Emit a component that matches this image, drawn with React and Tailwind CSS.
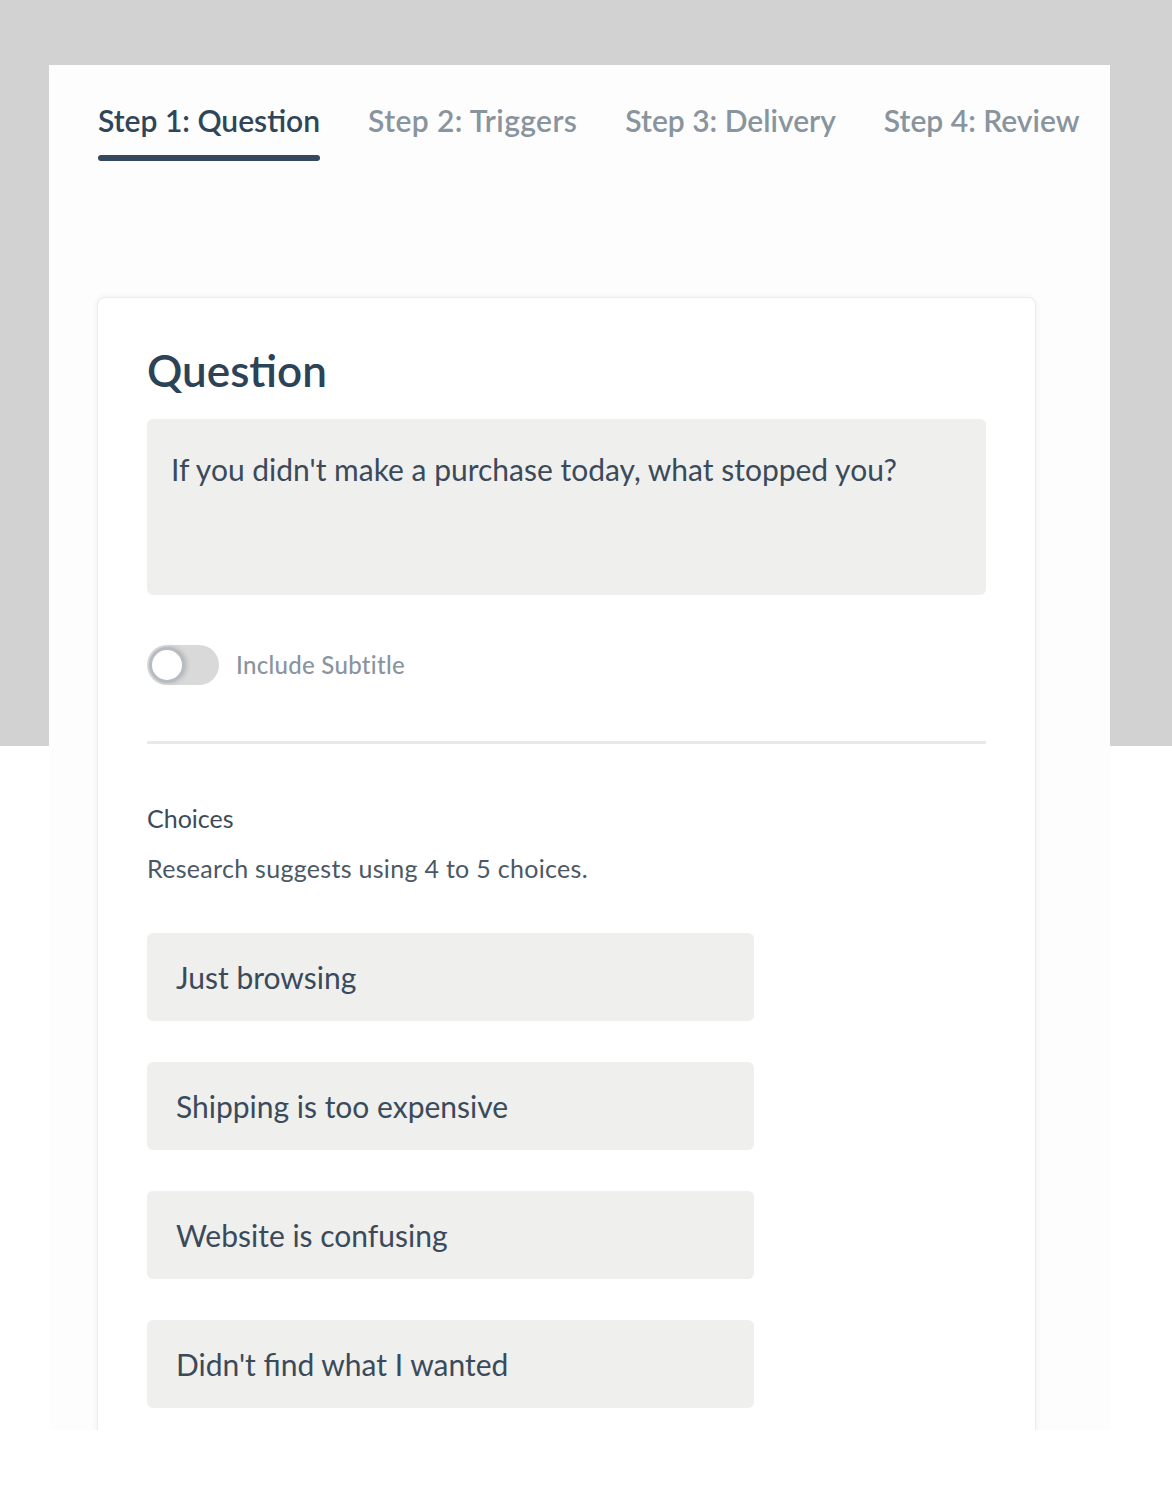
import { useState } from 'react'

const TABS = ['Step 1: Question', 'Step 2: Triggers', 'Step 3: Delivery', 'Step 4: Review']

const CHOICES = ['Just browsing', 'Shipping is too expensive', 'Website is confusing', "Didn't find what I wanted"]

export default function App() {
  const [subtitle, setSubtitle] = useState(false)

  return (
    <div className="min-h-[1508px] bg-[linear-gradient(#d2d2d2_0px,#d2d2d2_746px,#ffffff_746px)] pt-[65px] pb-[78px] font-['Lato',sans-serif]">
      <div className="ml-[49px] w-[1061px] h-[1365px] overflow-hidden bg-[#fdfdfd]">
        {/* step tabs */}
        <div className="flex gap-12 pl-[49px] pt-[35px]">
          {TABS.map((tab, i) => (
            <div key={tab} className="flex flex-col">
              <span className={'text-[30px] leading-[40px] font-semibold ' + (i === 0 ? 'text-[#2f4558]' : i === 1 ? 'text-[#88949e] tracking-[0.4px]' : 'text-[#88949e]')}>
                {tab}
              </span>
              <div className={'mt-[15px] h-[6px] rounded-full ' + (i === 0 ? 'bg-[#34495e]' : 'bg-transparent')} />
            </div>
          ))}
        </div>

        {/* question card */}
        <div className="ml-[48px] mt-[136px] w-[939px] h-[1200px] rounded-lg border border-[#ececec] bg-white px-[49px] pt-[44px] shadow-[0_0_6px_rgba(0,0,0,0.06)]">
          <h1 className="text-[44px] leading-[56px] font-semibold text-[#2c4256]">Question</h1>

          <div className="mt-[21px] h-[176px] rounded-md bg-[#efefee] px-[24px] pt-[30px]">
            <p className="text-[30px] leading-[40px] text-[#3a4a5a]">If you didn't make a purchase today, what stopped you?</p>
          </div>

          <div className="mt-[50px] flex items-center gap-[17px]">
            <button
              onClick={() => setSubtitle(!subtitle)}
              className="relative h-[40px] w-[72px] rounded-full bg-[#d9d9d9]"
              aria-label="Include Subtitle"
            >
              <span className="absolute left-[2px] top-[2px] h-[36px] w-[36px] rounded-full border-[3px] border-[#b6bcc2] bg-white shadow-[2px_0_4px_rgba(0,0,0,0.15)]" />
            </button>
            <span className="text-[24px] leading-[30px] font-medium tracking-[0.3px] text-[#8a949e]">Include Subtitle</span>
          </div>

          <div className="mt-[56px] h-[3px] bg-[#e9e9e9]" />

          <div className="mt-[58px] text-[25px] leading-[32px] text-[#3c4b5a]">Choices</div>
          <div className="mt-[18px] text-[25px] leading-[32px] tracking-[0.3px] text-[#4a5866]">Research suggests using 4 to 5 choices.</div>

          <div className="mt-[49px] flex flex-col gap-[41px]">
            {CHOICES.map((c) => (
              <div key={c} className="flex h-[88px] w-[607px] items-center rounded-md bg-[#efefee] px-[29px]">
                <span className="text-[30px] leading-[40px] text-[#3a4a5a]">{c}</span>
              </div>
            ))}
          </div>
        </div>
      </div>
    </div>
  )
}
